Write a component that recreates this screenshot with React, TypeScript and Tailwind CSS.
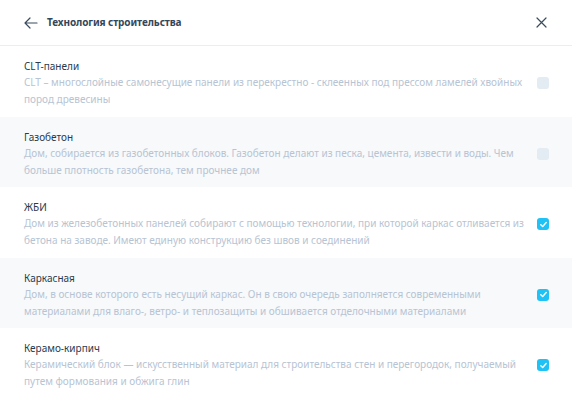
import React from "react";

const items = [
  {
    title: "CLT-панели",
    desc: "CLT – многослойные самонесущие панели из перекрестно - склеенных под прессом ламелей хвойных пород древесины",
    checked: false,
    gray: false,
  },
  {
    title: "Газобетон",
    desc: "Дом, собирается из газобетонных блоков. Газобетон делают из песка, цемента, извести и воды. Чем больше плотность газобетона, тем прочнее дом",
    checked: false,
    gray: true,
  },
  {
    title: "ЖБИ",
    desc: "Дом из железобетонных панелей собирают с помощью технологии, при которой каркас отливается из бетона на заводе. Имеют единую конструкцию без швов и соединений",
    checked: true,
    gray: false,
  },
  {
    title: "Каркасная",
    desc: "Дом, в основе которого есть несущий каркас. Он в свою очередь заполняется современными материалами для влаго-, ветро- и теплозащиты и обшивается отделочными материалами",
    checked: true,
    gray: true,
  },
  {
    title: "Керамо-кирпич",
    desc: "Керамический блок — искусственный материал для строительства стен и перегородок, получаемый путем формования и обжига глин",
    checked: true,
    gray: false,
  },
];

function Check({ checked }: { checked: boolean }) {
  if (!checked) {
    return <div className="w-[12px] h-[12px] rounded-[3px] bg-[#e3ebf3]" />;
  }
  return (
    <div className="w-[12px] h-[12px] rounded-[3px] bg-[#1ec2f4] flex items-center justify-center">
      <svg width="9" height="9" viewBox="0 0 10 10" fill="none">
        <path d="M2 5.2L4.1 7.2L8 2.8" stroke="white" strokeWidth="1.6" strokeLinecap="round" strokeLinejoin="round" />
      </svg>
    </div>
  );
}

export default function App() {
  return (
    <div
      className="w-[572px] h-[399px] bg-white overflow-hidden"
      style={{ fontFamily: '"Noto Sans", "Open Sans", sans-serif' }}
    >
      <div className="h-[46px] flex items-center pl-[24px] pr-[25px] border-b border-[#e8eef4]">
        <svg width="14" height="12" viewBox="0 0 14 12" fill="none" className="mr-[9px]">
          <path d="M13 6H1.5M6 1L1 6L6 11" stroke="#3a4b5e" strokeWidth="1.2" strokeLinecap="round" strokeLinejoin="round" />
        </svg>
        <div className="text-[10px] font-bold text-[#34465a] tracking-[-0.1px]">Технология строительства</div>
        <div className="ml-auto">
          <svg width="11" height="11" viewBox="0 0 11 11" fill="none">
            <path d="M1 1L10 10M10 1L1 10" stroke="#3a4b5e" strokeWidth="1.2" strokeLinecap="round" />
          </svg>
        </div>
      </div>
      {items.map((it) => (
        <div
          key={it.title}
          className={`flex items-center pl-[24px] pr-[23px] pt-[12px] pb-[8.5px] ${it.gray ? "bg-[#f7f9fb]" : "bg-white"}`}
        >
          <div className="w-[500px]">
            <div className="text-[10px] leading-[16px] text-[#2b3b4e]">{it.title}</div>
            <div className="text-[10px] leading-[17px] text-[#b7c4d3]">{it.desc}</div>
          </div>
          <div className="ml-auto">
            <Check checked={it.checked} />
          </div>
        </div>
      ))}
    </div>
  );
}
